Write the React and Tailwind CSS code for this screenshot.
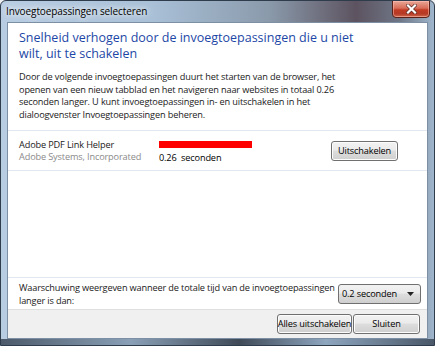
export default function App() {
  const btn =
    "h-[20px] px-0 whitespace-nowrap border border-[#707070] rounded-[3px] bg-[linear-gradient(#f2f2f2_0%,#ebebeb_45%,#dddddd_50%,#cfcfcf_100%)] text-[9.2px] tracking-[-0.15px] text-black flex items-center justify-center shadow-[inset_0_0_0_1px_#fcfcfc]";
  const small = "text-[9.2px] tracking-[-0.15px]";

  return (
    <div className="w-[435px] h-[346px] font-['Open_Sans',sans-serif] text-black bg-[#eef0f2]">
      <div className="relative w-[435px] h-[346px] rounded-t-[6px] border border-[#2e3c4c] bg-[linear-gradient(90deg,#b9cde2_0%,#a9c0d7_35%,#8a9aab_62%,#5d5360_82%,#6e7686_92%,#9fb6cc_100%)] flex flex-col overflow-hidden">
        {/* title bar */}
        <div className="h-[21px] flex items-center pl-[5px] shrink-0">
          <span className="text-[10px] tracking-[-0.1px] [text-shadow:0_0_5px_#ffffff,0_0_8px_#ffffff]">
            Invoegtoepassingen selecteren
          </span>
        </div>
        <div className="absolute right-[4px] top-[-1px] w-[38px] h-[18px] rounded-b-[4px] border border-[#5b2118] bg-[linear-gradient(#e9a797_0%,#d76c58_45%,#c23c24_55%,#b53a25_80%,#cf6a4c_100%)] flex items-center justify-center shadow-[inset_0_0_0_1px_rgba(255,200,190,0.5)]">
          <svg width="11" height="10" viewBox="0 0 11 10">
            <path d="M2 1.5 L9 8.5 M9 1.5 L2 8.5" stroke="#5b2a22" strokeWidth="3.6" strokeLinecap="square" />
            <path d="M2 1.5 L9 8.5 M9 1.5 L2 8.5" stroke="#ffffff" strokeWidth="2.2" strokeLinecap="square" />
          </svg>
        </div>

        {/* client area */}
        <div className="mx-[6px] h-[317px] border border-[#7c8fa5] bg-white flex flex-col shrink-0">
          <div className="flex-1 flex flex-col">
            <div className="pl-[11px] pt-[7px] text-[12.5px] leading-[16px] text-[#1d47a6]">
              Snelheid verhogen door de invoegtoepassingen die u niet
              <br />
              wilt, uit te schakelen
            </div>
            <div className={small + " pl-[11px] pt-[9px] leading-[12.5px] text-[#1a1a1a] whitespace-nowrap"}>
              Door de volgende invoegtoepassingen duurt het starten van de browser, het
              <br />
              openen van een nieuw tabblad en het navigeren naar websites in totaal 0.26
              <br />
              seconden langer. U kunt invoegtoepassingen in- en uitschakelen in het
              <br />
              dialoogvenster Invoegtoepassingen beheren.
            </div>

            <div className="mt-[9px] border-t border-b border-[#e2e8f0] h-[41px] flex items-center">
              <div className={small + " pl-[11px] w-[151px] leading-[12px] whitespace-nowrap"}>
                <div className="text-[#1a1a1a]">Adobe PDF Link Helper</div>
                <div className="text-[#8a8a8a]">Adobe Systems, Incorporated</div>
              </div>
              <div className="w-[172px] flex flex-col pt-[4px]">
                <div className="w-[93px] h-[7px] bg-[#f00]" />
                <div className={small + " leading-[12px] mt-[4px] whitespace-pre"}>0.26  seconden</div>
              </div>
              <button className={btn + " w-[67px]"}>Uitschakelen</button>
            </div>
          </div>

          <div className="border-t border-[#e2e8f0] h-[32px] flex items-center justify-between pl-[11px] pr-[6px]">
            <div className={small + " leading-[13px] text-[#1a1a1a] whitespace-nowrap"}>
              Waarschuwing weergeven wanneer de totale tijd van de invoegtoepassingen
              <br />
              langer is dan:
            </div>
            <div className={small + " shrink-0 w-[83px] h-[20px] border border-[#707070] rounded-[3px] bg-[linear-gradient(#f2f2f2_0%,#ebebeb_45%,#dddddd_50%,#cfcfcf_100%)] flex items-center justify-between pl-[3px] pr-[6px] whitespace-nowrap"}>
              <span>0.2 seconden</span>
              <svg width="7" height="4" viewBox="0 0 7 4">
                <path d="M0 0 H7 L3.5 4 Z" fill="#222" />
              </svg>
            </div>
          </div>

          <div className="h-[29px] bg-[#f0f0f0] border-t border-[#dfdfdf] flex items-center justify-end gap-[1px] pr-[7px]">
            <button className={btn + " w-[75px]"}>Alles uitschakelen</button>
            <button className={btn + " w-[67px]"}>Sluiten</button>
          </div>
        </div>

        {/* bottom frame */}
        <div className="flex-1 bg-[linear-gradient(90deg,#4c5a6a_0%,#8aa0b6_30%,#3f4a58_55%,#8ea6be_75%,#4a5868_100%)]" />
      </div>
    </div>
  );
}
